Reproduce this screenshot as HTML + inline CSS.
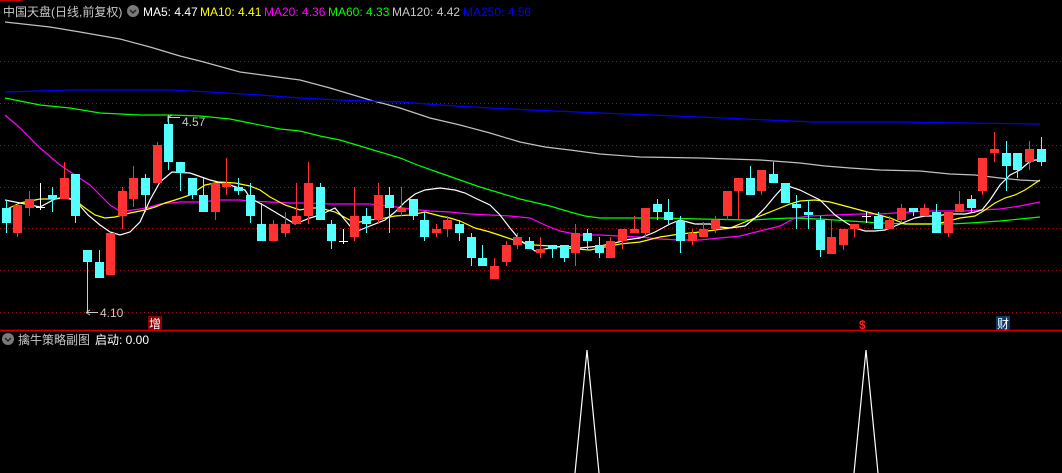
<!DOCTYPE html>
<html><head><meta charset="utf-8"><style>
html,body{margin:0;padding:0;background:#000;width:1062px;height:473px;overflow:hidden}
svg{display:block}
text{font-family:"Liberation Sans","Noto Sans CJK SC",sans-serif;font-size:12px}
</style></head><body>
<svg id="s" width="1062" height="473" xmlns="http://www.w3.org/2000/svg">
<rect width="1062" height="473" fill="#000"/>
<g stroke="#a01010" stroke-dasharray="1,3" stroke-width="1">
<line x1="0" y1="61.5" x2="1062" y2="61.5"/><line x1="0" y1="103.5" x2="1062" y2="103.5"/>
<line x1="0" y1="145.5" x2="1062" y2="145.5"/><line x1="0" y1="187.5" x2="1062" y2="187.5"/>
<line x1="0" y1="228.5" x2="1062" y2="228.5"/><line x1="0" y1="270.5" x2="1062" y2="270.5"/>
<line x1="0" y1="312.5" x2="1062" y2="312.5"/>
</g>
<path d="M0 0.5H22M22 0V2" stroke="#c00000" fill="none"/>
<g id="ma" fill="none" stroke-width="1.2"></g>
<g id="cd"></g>
<line x1="0" y1="330.5" x2="1062" y2="330.5" stroke="#d00000" stroke-width="1.5"/>
<text x="3" y="16" fill="#c8c8c8">中国天盘(日线,前复权)</text>
<circle cx="133" cy="11" r="6" fill="#7a7a7a"/><path d="M130 10l3 3 3-3" stroke="#222" fill="none" stroke-width="1.5"/>
<text x="143" y="16" fill="#fff">MA5: 4.47</text>
<text x="200" y="16" fill="#ffff00">MA10: 4.41</text>
<text x="264" y="16" fill="#ff00ff">MA20: 4.36</text>
<text x="328" y="16" fill="#00ff00">MA60: 4.33</text>
<text x="392" y="16" fill="#c8c8c8">MA120: 4.42</text>
<text x="463" y="16" fill="#0000ff">MA250: 4.56</text>
<path d="M168 116V122M168 117.5L172 115M168 117.5h12" stroke="#c8c8c8" fill="none"/>
<text x="182" y="126" fill="#c8c8c8">4.57</text>
<path d="M86 312.5h12M86 312.5l4-2.5M86 312.5l4 2.5" stroke="#c8c8c8" fill="none"/>
<text x="100" y="317" fill="#c8c8c8">4.10</text>
<rect x="148" y="316" width="14" height="14" fill="#8b0000"/>
<text x="149" y="328" fill="#fff">增</text>
<text x="859" y="329" fill="#ff2020" font-weight="bold">$</text>
<rect x="996" y="316" width="14" height="14" fill="#0a3a6a"/>
<text x="997" y="328" fill="#fff">财</text>
<circle cx="8" cy="339" r="6" fill="#7a7a7a"/><path d="M5 338l3 3 3-3" stroke="#222" fill="none" stroke-width="1.5"/>
<text x="18" y="344" fill="#c8c8c8">擒牛策略副图</text>
<text x="95" y="344" fill="#fff">启动: 0.00</text>
<path d="M575 473L587 350L599 473M854 473L866 350L878 473" stroke="#fff" fill="none" stroke-width="1.2"/>
</svg>
<script>
var d=[["c",208,223,200,233],["r",205,233,204,237],["r",199,208,191,216],["w",207,207,183,210],["c",195,199,187,212],["r",178,199,162,199],["c",174,216,174,223],["c",250,262,250,312],["c",262,278,250,278],["r",233,275,233,275],["r",191,216,187,229],["r",178,199,166,207],["c",178,195,174,212],["r",145,183,142,183],["c",124,162,115,170],["c",162,173,162,191],["c",178,195,178,199],["c",195,212,178,212],["r",183,212,183,220],["r",183,187,158,195],["c",187,191,178,195],["c",195,216,183,223],["c",224,241,203,241],["r",224,241,220,241],["r",224,233,212,237],["r",216,224,183,224],["r",183,216,162,224],["c",187,220,183,220],["c",224,241,220,249],["w",241,241,229,244],["r",216,237,187,241],["c",216,224,208,233],["r",195,220,183,224],["c",195,208,187,233],["r",208,212,187,216],["c",199,216,199,220],["c",220,237,212,241],["r",229,233,224,237],["r",220,229,216,237],["c",224,233,220,241],["c",237,258,233,266],["c",258,266,245,266],["r",266,279,258,279],["r",245,262,241,266],["r",237,245,233,249],["c",241,249,237,249],["r",249,253,237,258],["c",245,249,245,258],["c",245,258,245,262],["r",233,253,224,266],["c",233,241,229,249],["c",245,253,237,258],["r",241,258,237,258],["r",229,241,229,249],["r",229,233,216,233],["r",208,233,208,237],["c",204,212,199,220],["c",212,220,199,224],["c",221,241,216,253],["r",233,241,229,245],["r",229,237,222,237],["r",220,229,216,233],["r",191,216,191,220],["r",178,191,178,220],["c",178,195,166,195],["r",170,191,170,195],["c",174,183,162,183],["c",183,203,183,203],["c",204,208,195,229],["c",212,215,200,229],["c",220,250,216,257],["r",237,254,220,254],["r",229,245,229,250],["r",224,229,224,237],["w",216,216,212,223],["c",216,229,212,229],["r",220,229,216,229],["r",208,220,204,223],["c",208,212,208,216],["r",208,216,204,216],["c",212,233,204,233],["r",212,233,212,237],["r",204,212,191,212],["c",199,208,195,212],["r",158,191,158,195],["r",149,153,132,162],["c",153,166,141,191],["c",153,170,153,178],["r",149,162,141,170],["c",149,162,137,166]];
var h="",col={r:"#ff3232",c:"#54ffff",w:"#ffffff"};
d.forEach(function(a,i){var x=Math.round(5.5+11.63*i),c=col[a[0]];
h+='<line x1="'+(x+.5)+'" y1="'+a[3]+'" x2="'+(x+.5)+'" y2="'+a[4]+'" stroke="'+c+'"/>';
var ht=a[2]-a[1];if(ht<1)h+='<line x1="'+(x-4)+'" y1="'+(a[1]+.5)+'" x2="'+(x+5)+'" y2="'+(a[1]+.5)+'" stroke="'+c+'"/>';
else h+='<rect x="'+(x-4)+'" y="'+a[1]+'" width="9" height="'+ht+'" fill="'+c+'"/>';});
document.getElementById("cd").innerHTML=h;
var L={"#c0c0c0":[5,22,50,27,80,32,120,39,150,47,180,56,200,61,240,72,300,80,330,88,370,100,400,108,430,118,460,125,490,133,520,142,545,147,570,150,600,154,640,157,700,158,760,160,800,163,825,166,850,168,880,170,920,171,950,174,975,175,1000,178,1020,180,1040,181],
"#0000ff":[5,92,70,90,170,90,210,92,260,95,300,98,340,100,400,102,440,105,490,108,530,110,600,113,700,117,790,121,815,122,900,122,965,123,1040,124],
"#00ff00":[5,98,40,105,70,108,100,113,140,115,170,115,200,116,230,119,250,123,280,129,300,131,320,136,340,140,360,146,380,152,400,158,420,166,440,173,460,180,480,187,500,193,520,199,550,206,570,212,585,216,600,218,620,218,660,218,700,219,750,220,790,218,820,219,850,221,880,223,910,224,950,224,970,223,1000,221,1020,219,1040,217],
"#ff00ff":[5,115,20,128,40,148,60,165,75,175,90,185,100,195,110,205,118,210,125,211,140,209,150,207,160,204,180,202,200,202,220,200,240,200,250,201,270,202,290,203,310,203,330,204,350,204,370,204,390,206,410,209,430,211,450,212,470,214,490,215,510,216,530,218,545,225,560,231,580,235,600,235,620,236,640,237,660,239,680,240,700,240,720,238,740,236,760,231,780,226,795,218,810,216,835,215,860,214,880,214,895,213,910,212,930,211,950,211,965,211,980,210,1000,209,1020,206,1040,202],
"#ffff00":[5,210,20,203,40,199,55,199,65,198,75,200,85,208,95,215,105,218,115,217,130,213,145,210,155,207,165,203,175,200,190,195,205,185,220,182,235,183,250,186,260,190,270,197,285,205,300,210,310,208,320,208,335,212,355,223,370,220,385,218,395,216,410,215,425,212,440,216,450,218,460,221,475,228,490,232,505,237,520,242,535,245,550,246,560,247,575,249,590,250,605,247,620,244,640,242,660,237,680,234,700,232,715,230,730,228,745,222,760,216,775,210,790,204,800,201,815,200,830,202,845,206,860,210,875,214,890,218,905,224,920,224,935,224,945,222,960,218,975,216,985,210,995,203,1005,198,1015,195,1025,190,1040,180],
"#ffffff":[5,200,20,203,40,207,55,199,65,197,75,200,88,215,100,225,110,232,120,235,130,232,140,222,150,200,160,182,172,172,190,173,210,180,230,185,245,190,250,198,265,206,285,218,295,224,310,218,320,215,335,208,345,220,355,232,370,226,385,220,395,212,405,202,415,194,425,190,440,188,455,190,465,193,475,198,490,205,500,215,510,228,520,240,535,251,550,248,565,246,580,248,600,246,615,243,625,240,640,238,655,232,670,224,680,220,695,224,710,224,720,227,730,228,745,226,755,218,765,208,775,196,785,185,800,190,812,196,820,200,825,205,835,215,845,222,855,228,865,231,875,231,885,230,895,226,905,222,915,218,925,216,935,216,950,214,965,214,975,212,982,210,990,200,1000,185,1010,175,1020,170,1028,163,1035,160,1040,160]};
var m="";for(var k in L){m+='<polyline stroke="'+k+'" points="'+L[k].join(" ")+'"/>';}
document.getElementById("ma").innerHTML=m;
</script>
</body></html>
